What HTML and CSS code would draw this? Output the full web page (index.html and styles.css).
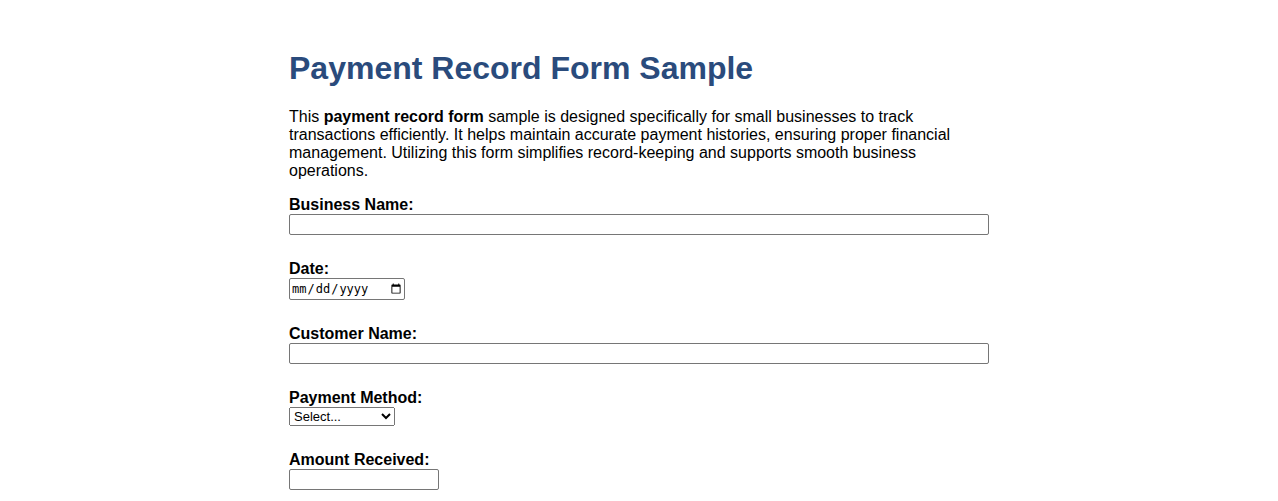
FILE: index.html
```html
<!DOCTYPE html>
<html lang="en">
<head>
<meta charset="utf-8">
<title>Payment Record Form Sample</title>
<link rel="stylesheet" href="styles.css">
</head>
<body>
<main class="page">
  <h1 class="title">Payment Record Form Sample</h1>
  <p class="intro">This <strong>payment record form</strong> sample is designed specifically for small businesses to track transactions efficiently. It helps maintain accurate payment histories, ensuring proper financial management. Utilizing this form simplifies record-keeping and supports smooth business operations.</p>
  <form class="form">
    <div class="field">
      <label class="label" for="business">Business Name:</label>
      <input class="input input-wide" type="text" id="business">
    </div>
    <div class="field">
      <label class="label" for="date">Date:</label>
      <input class="input input-date" type="date" id="date">
    </div>
    <div class="field">
      <label class="label" for="customer">Customer Name:</label>
      <input class="input input-wide" type="text" id="customer">
    </div>
    <div class="field">
      <label class="label" for="method">Payment Method:</label>
      <select class="select" id="method">
        <option>Select...</option>
        <option>Cash</option>
        <option>Credit Card</option>
        <option>Bank Transfer</option>
        <option>Check</option>
      </select>
    </div>
    <div class="field">
      <label class="label" for="amount">Amount Received:</label>
      <input class="input input-amount" type="number" id="amount">
    </div>
  </form>
</main>
</body>
</html>
```

FILE: styles.css
```css
body {
  margin: 0;
  font-family: "Liberation Sans", Arial, sans-serif;
  font-size: 16px;
  color: #000;
  background: #fff;
}

.page {
  max-width: 700px;
  margin: 0 auto;
  padding: 20px 0;
}

.title {
  color: #2a4b7c;
  font-size: 32px;
  margin: 30px 0 21px;
}

.intro {
  margin: 0 0 16px;
}

.form {
  display: flex;
  flex-direction: column;
  gap: 25px;
}

.field {
  display: flex;
  flex-direction: column;
  align-items: flex-start;
}

.label {
  font-weight: bold;
  line-height: 18px;
}

.input {
  box-sizing: border-box;
  height: 21px;
  border: 1px solid #767676;
  border-radius: 2px;
  margin: 0;
}

.input-wide {
  width: 700px;
}

.input-date {
  width: 116px;
  height: 22px;
  font-size: 12px;
}

.input-amount {
  width: 150px;
}

.select {
  box-sizing: border-box;
  width: 106px;
  height: 19px;
  font-family: "Liberation Sans", Arial, sans-serif;
  font-size: 13px;
  margin: 0;
}
```
